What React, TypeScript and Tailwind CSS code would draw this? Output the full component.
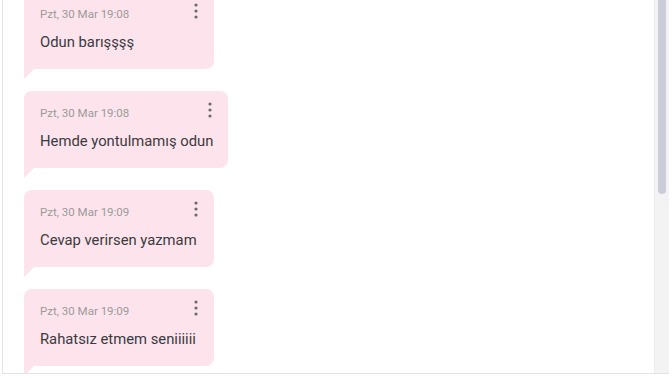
import React from "react"

interface Message {
  time: string
  text: string
}

const messages: Message[] = [
  { time: "Pzt, 30 Mar 19:08", text: "Odun barışşşş" },
  { time: "Pzt, 30 Mar 19:08", text: "Hemde yontulmamış odun" },
  { time: "Pzt, 30 Mar 19:09", text: "Cevap verirsen yazmam" },
  { time: "Pzt, 30 Mar 19:09", text: "Rahatsız etmem seniiiiii" },
]

function KebabIcon() {
  return (
    <svg width="6" height="16" viewBox="0 0 6 16" className="mt-[-3px] shrink-0">
      <circle cx="3" cy="2" r="1.6" fill="#6b6b6b" />
      <circle cx="3" cy="8" r="1.6" fill="#6b6b6b" />
      <circle cx="3" cy="14" r="1.6" fill="#6b6b6b" />
    </svg>
  )
}

function Bubble({ time, text }: Message) {
  return (
    <div className="flex flex-col items-start">
      <div className="min-w-[190px] rounded-t-lg rounded-br-lg bg-[#fde4ec] pl-4 pr-[15px] pt-[14px] pb-[17px]">
        {/* header */}
        <div className="flex items-start justify-between gap-4">
          <span className="text-[11.5px] leading-4 text-[#9a9a9a]">{time}</span>
          <KebabIcon />
        </div>
        <p className="mt-[10px] whitespace-nowrap text-[14.8px] leading-5 text-[#3a3a3f]">{text}</p>
      </div>
      {/* tail */}
      <div className="h-[10px] w-[10px] bg-[#fde4ec] [clip-path:polygon(0_0,100%_0,0_100%)]"></div>
    </div>
  )
}

export default function App() {
  return (
    <div className="h-[378px] w-[672px] overflow-hidden bg-white font-['Roboto','Liberation_Sans',sans-serif]">
      <div className="ml-[2px] flex h-[374px] w-[667px] border-b border-l border-[#e3e3e3]">
        {/* message list */}
        <div className="flex-1 overflow-hidden pl-[21px]">
          <div className="mt-[-8px] flex flex-col gap-3">
            {messages.map((m, i) => (
              <Bubble key={i} time={m.time} text={m.text} />
            ))}
          </div>
        </div>

        {/* scrollbar */}
        <div className="flex w-[15px] shrink-0 justify-center border-l border-[#ececec] bg-[#f3f3f3]">
          <div className="h-[194px] w-[8px] rounded-b-full bg-[#c9cdd8]"></div>
        </div>
      </div>
    </div>
  )
}
